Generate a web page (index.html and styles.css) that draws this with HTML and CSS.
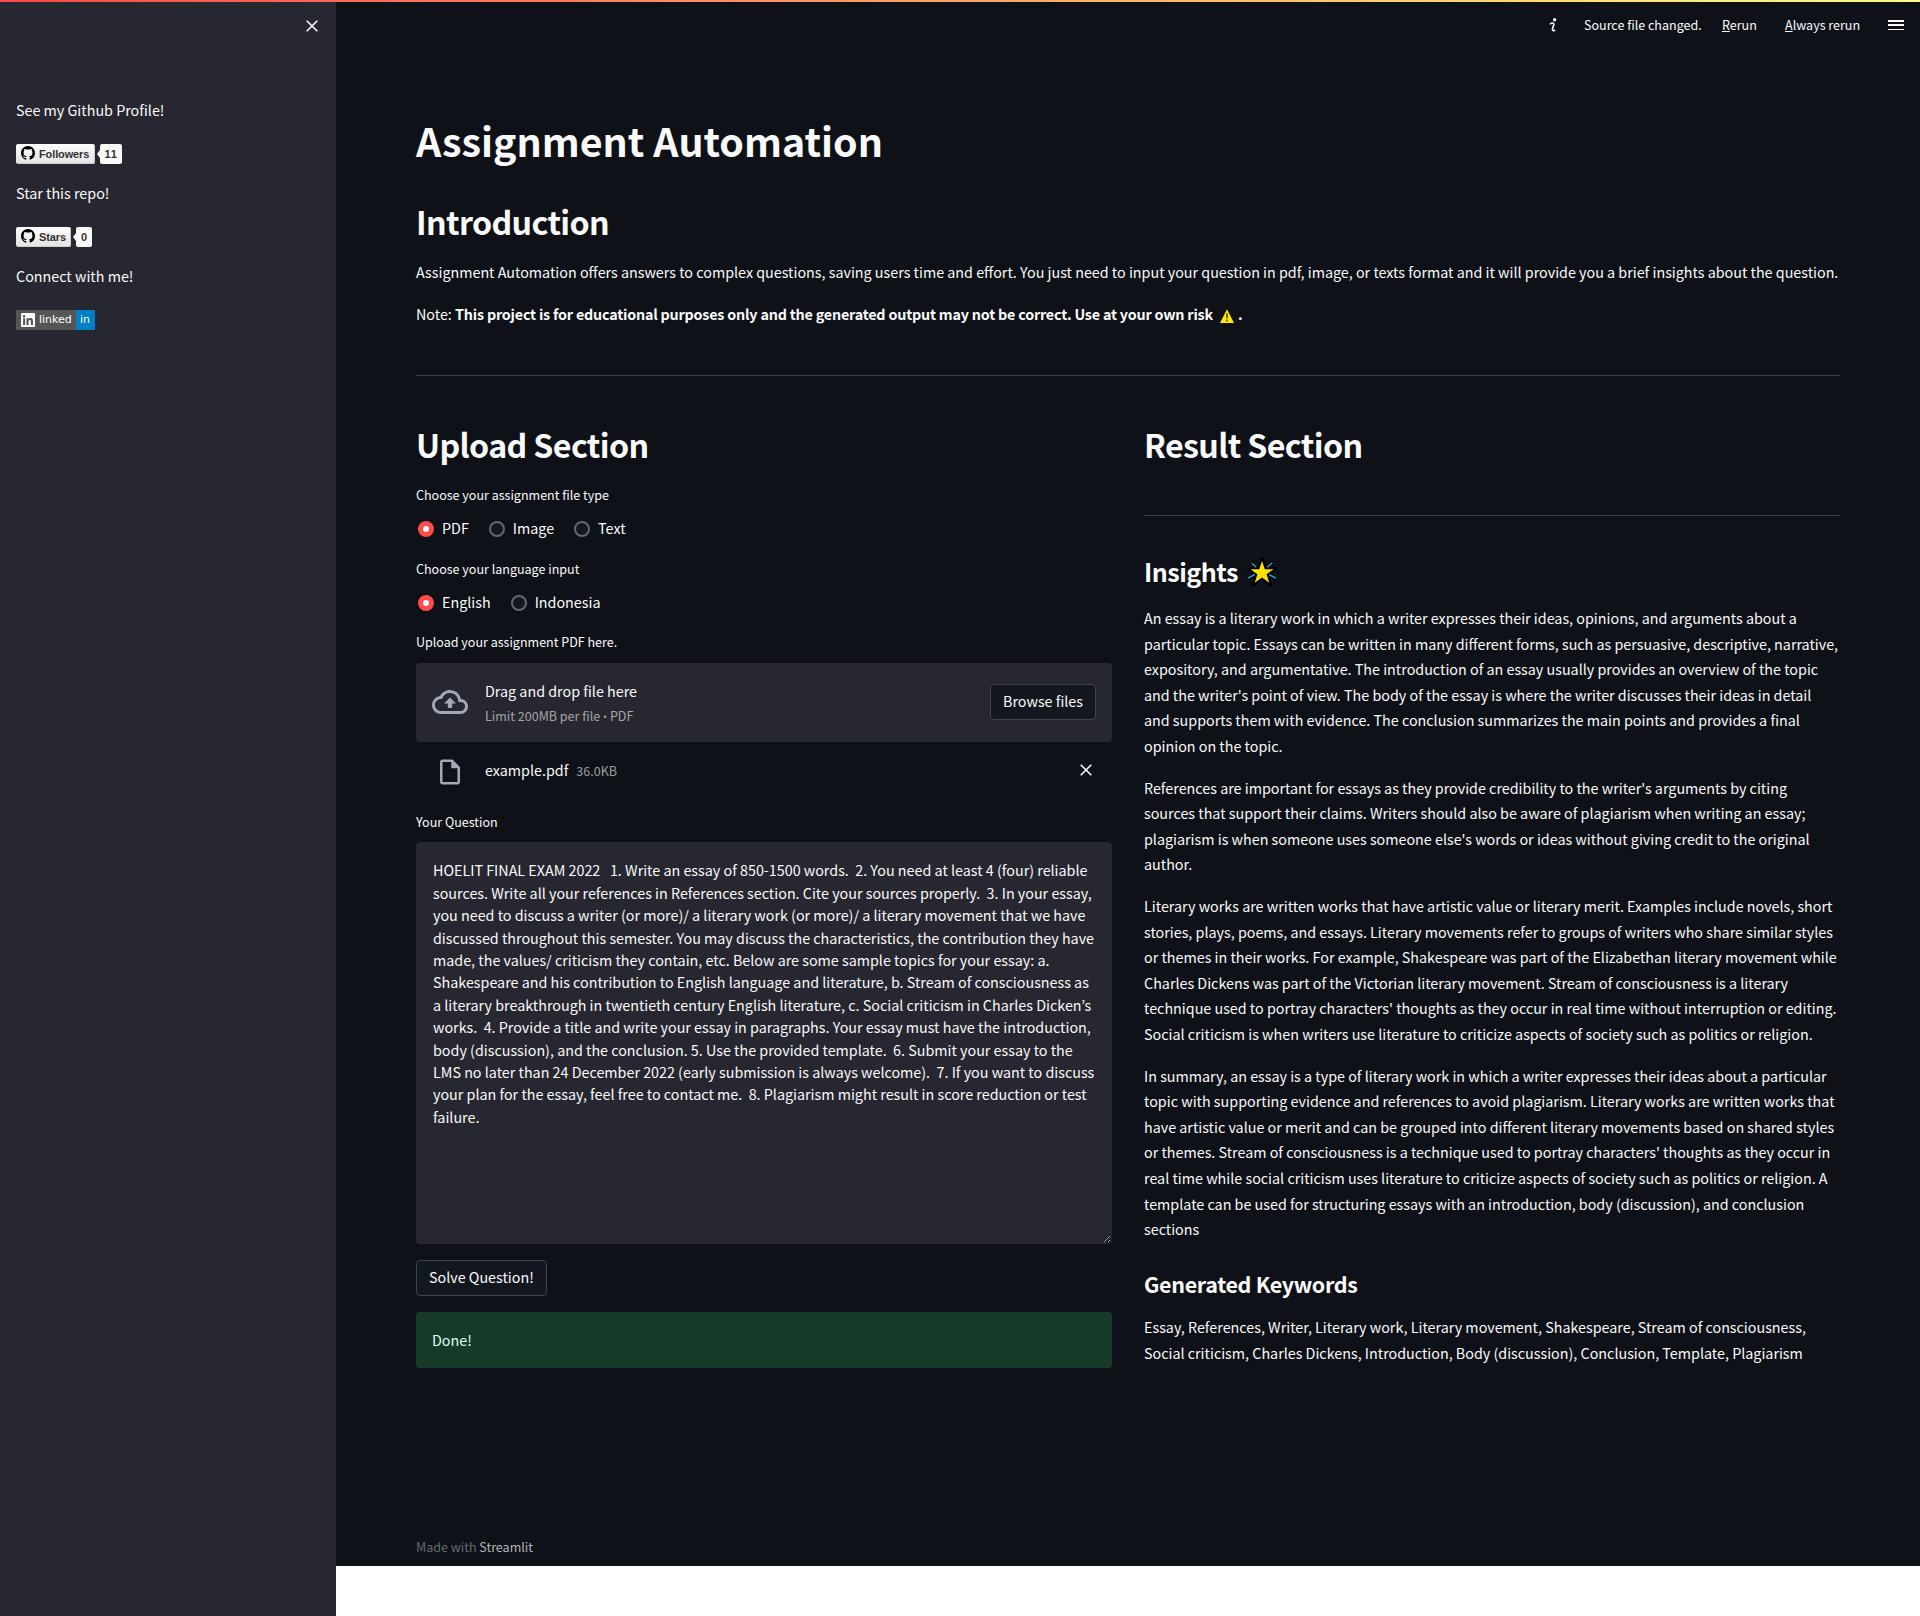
FILE: index.html
```html
<!DOCTYPE html>
<html lang="en">
<head>
<meta charset="utf-8">
<title>Assignment Automation</title>
<link rel="stylesheet" href="styles.css">
</head>
<body>
<div class="decoration"></div>
<div class="app">
  <aside class="sidebar">
    <div class="sidebar-head">
      <svg class="close" viewBox="0 0 12 12"><path d="M.7.7l10.6 10.6M11.3.7L.7 11.3"/></svg>
    </div>
    <p>See my Github Profile!</p>
    <div class="badge">
      <span class="badge-label followers"><svg viewBox="0 0 16 16"><path d="M8 0C3.58 0 0 3.58 0 8c0 3.54 2.29 6.53 5.47 7.59.4.07.55-.17.55-.38 0-.19-.01-.82-.01-1.49-2.01.37-2.53-.49-2.69-.94-.09-.23-.48-.94-.82-1.13-.28-.15-.68-.52-.01-.53.63-.01 1.08.58 1.23.82.72 1.21 1.87.87 2.33.66.07-.52.28-.87.51-1.07-1.78-.2-3.64-.89-3.64-3.95 0-.87.31-1.59.82-2.15-.08-.2-.36-1.02.08-2.12 0 0 .67-.21 2.2.82.64-.18 1.32-.27 2-.27s1.36.09 2 .27c1.53-1.04 2.2-.82 2.2-.82.44 1.1.16 1.92.08 2.12.51.56.82 1.27.82 2.15 0 3.07-1.87 3.75-3.65 3.95.29.25.54.73.54 1.48 0 1.07-.01 1.93-.01 2.2 0 .21.15.46.55.38A8.01 8.01 0 0016 8c0-4.42-3.58-8-8-8z"/></svg><span>Followers</span></span>
      <span class="badge-count wide">11</span>
    </div>
    <p>Star this repo!</p>
    <div class="badge">
      <span class="badge-label stars"><svg viewBox="0 0 16 16"><path d="M8 0C3.58 0 0 3.58 0 8c0 3.54 2.29 6.53 5.47 7.59.4.07.55-.17.55-.38 0-.19-.01-.82-.01-1.49-2.01.37-2.53-.49-2.69-.94-.09-.23-.48-.94-.82-1.13-.28-.15-.68-.52-.01-.53.63-.01 1.08.58 1.23.82.72 1.21 1.87.87 2.33.66.07-.52.28-.87.51-1.07-1.78-.2-3.64-.89-3.64-3.95 0-.87.31-1.59.82-2.15-.08-.2-.36-1.02.08-2.12 0 0 .67-.21 2.2.82.64-.18 1.32-.27 2-.27s1.36.09 2 .27c1.53-1.04 2.2-.82 2.2-.82.44 1.1.16 1.92.08 2.12.51.56.82 1.27.82 2.15 0 3.07-1.87 3.75-3.65 3.95.29.25.54.73.54 1.48 0 1.07-.01 1.93-.01 2.2 0 .21.15.46.55.38A8.01 8.01 0 0016 8c0-4.42-3.58-8-8-8z"/></svg><span>Stars</span></span>
      <span class="badge-count">0</span>
    </div>
    <p>Connect with me!</p>
    <div class="badge linkedin">
      <span class="linked"><svg viewBox="0 0 24 24"><path fill-rule="evenodd" d="M1.5 0h21A1.5 1.5 0 0124 1.500v21a1.500 1.500 0 01-1.500 1.500h-21A1.500 1.500 0 010 22.500v-21A1.500 1.500 0 011.500 0zM3.600 9v11.400h3.500V9zM5.300 3.400a2 2 0 100 4.100 2 2 0 000-4.100zM9.400 9v11.400h3.500v-5.600c0-1.500.3-3 2.200-3s1.900 1.700 1.900 3.100v5.500h3.500v-6.300c0-3.100-.7-5.400-4.300-5.400-1.700 0-2.900.9-3.400 1.800V9z"/></svg><span>linked</span></span><span class="in">in</span>
    </div>
  </aside>

  <main class="main">
    <header class="toolbar">
      <svg class="info" viewBox="0 0 8 14"><circle cx="5.600" cy="1.700" r="1.700"/><path d="M1 6.300C2 4.600 5.500 4.300 4.800 6.800L3.500 10.800C3 12.900 5 13.300 6 11.800"/></svg>
      <span class="t-source">Source file changed.</span>
      <span class="t-rerun"><u>R</u>erun</span>
      <span class="t-always"><u>A</u>lways rerun</span>
      <span class="menu"><i></i><i></i><i></i></span>
    </header>

    <div class="content">
      <h1>Assignment Automation</h1>
      <h2>Introduction</h2>
      <p class="intro">Assignment Automation offers answers to complex questions, saving users time and effort. You just need to input your question in pdf, image, or texts format and it will provide you a brief insights about the question.</p>
      <p>Note: <b>This project is for educational purposes only and the generated output may not be correct. Use at your own risk <svg class="warn" viewBox="0 0 16 16"><path d="M8 1.300L15 15H1z"/><path class="mark" d="M8 5.600v4.600M8 11.500v1.700"/></svg> .</b></p>
      <hr>

      <div class="columns">
        <section class="upload">
          <h2>Upload Section</h2>
          <label class="label">Choose your assignment file type</label>
          <div class="radios">
            <span class="radio"><i class="dot on"></i>PDF</span>
            <span class="radio"><i class="dot"></i>Image</span>
            <span class="radio"><i class="dot"></i>Text</span>
          </div>
          <label class="label">Choose your language input</label>
          <div class="radios">
            <span class="radio"><i class="dot on"></i>English</span>
            <span class="radio"><i class="dot"></i>Indonesia</span>
          </div>
          <label class="label upload-label">Upload your assignment PDF here.</label>
          <div class="dropzone">
            <svg class="cloud" viewBox="0 0 24 24"><path d="M19.350 10.040A7.490 7.490 0 0012 4C9.110 4 6.600 5.640 5.350 8.040A5.994 5.994 0 000 14c0 3.310 2.690 6 6 6h13c2.760 0 5-2.240 5-5 0-2.640-2.050-4.780-4.650-4.960zM19 18H6c-2.210 0-4-1.790-4-4 0-2.050 1.530-3.760 3.560-3.970l1.070-.11.500-.95A5.469 5.469 0 0112 6c2.620 0 4.880 1.860 5.390 4.430l.3 1.500 1.530.11A2.980 2.980 0 0122 15c0 1.650-1.350 3-3 3zM8 13h2.550v3h2.900v-3H16l-4-4z"/></svg>
            <div class="drop-text"><span>Drag and drop file here</span><small>Limit 200MB per file <span class="bullet">•</span> PDF</small></div>
            <button class="btn">Browse files</button>
          </div>
          <div class="file">
            <svg class="doc" viewBox="0 0 24 24"><path d="M14 2H6c-1.100 0-1.990.9-1.990 2L4 20c0 1.100.89 2 1.990 2H18c1.100 0 2-.9 2-2V8l-6-6zM6 20V4h7v5h5v11H6z"/></svg>
            <span>example.pdf</span><small>36.0KB</small>
            <svg class="close" viewBox="0 0 12 12"><path d="M.7.7l10.600 10.600M11.300.7L.7 11.300"/></svg>
          </div>
          <label class="label question-label">Your Question</label>
          <textarea class="question" spellcheck="false">HOELIT FINAL EXAM 2022   1. Write an essay of 850-1500 words.  2. You need at least 4 (four) reliable sources. Write all your references in References section. Cite your sources properly.  3. In your essay, you need to discuss a writer (or more)/ a literary work (or more)/ a literary movement that we have discussed throughout this semester. You may discuss the characteristics, the contribution they have made, the values/ criticism they contain, etc. Below are some sample topics for your essay: a. Shakespeare and his contribution to English language and literature, b. Stream of consciousness as a literary breakthrough in twentieth century English literature, c. Social criticism in Charles Dicken’s works.  4. Provide a title and write your essay in paragraphs. Your essay must have the introduction, body (discussion), and the conclusion. 5. Use the provided template.  6. Submit your essay to the LMS no later than 24 December 2022 (early submission is always welcome).  7. If you want to discuss your plan for the essay, feel free to contact me.  8. Plagiarism might result in score reduction or test failure.</textarea>
          <button class="btn solve">Solve Question!</button>
          <div class="done">Done!</div>
        </section>

        <section class="result">
          <h2>Result Section</h2>
          <hr>
          <h3>Insights <svg class="star" viewBox="0 0 30 30"><path class="halo" d="M4.800 6.300l4.500 4M25.300 5.700L20 10.300M1.800 21L8 17.300M22 17.700l6.200 3.300M15 4.300l2.600 8h8.700l-7 5 2.700 8.200-7-5-7 5 2.700-8.200-7-5h8.700z"/><path class="rays" d="M4.800 6.300l4.500 4M25.300 5.700L20 10.300M1.300 21L8 17.300M22 17.700l6.700 3.300"/><path class="body" d="M15 4l2.800 8.200h8.700l-6.900 5.100 2.700 8.400-7.300-5.100-7.300 5.100 2.700-8.400-6.900-5.100h8.700z"/></svg></h3>
          <p>An essay is a literary work in which a writer expresses their ideas, opinions, and arguments about a particular topic. Essays can be written in many different forms, such as persuasive, descriptive, narrative, expository, and argumentative. The introduction of an essay usually provides an overview of the topic and the writer's point of view. The body of the essay is where the writer discusses their ideas in detail and supports them with evidence. The conclusion summarizes the main points and provides a final opinion on the topic.</p>
          <p>References are important for essays as they provide credibility to the writer's arguments by citing sources that support their claims. Writers should also be aware of plagiarism when writing an essay; plagiarism is when someone uses someone else's words or ideas without giving credit to the original author.</p>
          <p>Literary works are written works that have artistic value or literary merit. Examples include novels, short stories, plays, poems, and essays. Literary movements refer to groups of writers who share similar styles or themes in their works. For example, Shakespeare was part of the Elizabethan literary movement while Charles Dickens was part of the Victorian literary movement. Stream of consciousness is a literary technique used to portray characters' thoughts as they occur in real time without interruption or editing. Social criticism is when writers use literature to criticize aspects of society such as politics or religion.</p>
          <p>In summary, an essay is a type of literary work in which a writer expresses their ideas about a particular topic with supporting evidence and references to avoid plagiarism. Literary works are written works that have artistic value or merit and can be grouped into different literary movements based on shared styles or themes. Stream of consciousness is a technique used to portray characters' thoughts as they occur in real time while social criticism uses literature to criticize aspects of society such as politics or religion. A template can be used for structuring essays with an introduction, body (discussion), and conclusion sections</p>
          <h4>Generated Keywords</h4>
          <p>Essay, References, Writer, Literary work, Literary movement, Shakespeare, Stream of consciousness, Social criticism, Charles Dickens, Introduction, Body (discussion), Conclusion, Template, Plagiarism</p>
        </section>
      </div>
    </div>
    <footer>Made with <span>Streamlit</span></footer>
  </main>
</div>
</body>
</html>
```

FILE: styles.css
```css
* { box-sizing: border-box; }

body {
  margin: 0;
  background: #fff;
  color: #fafafa;
  font-family: "Noto Sans CJK KR", "Noto Sans", sans-serif;
  font-size: 14.325px;
  line-height: 25.6px;
}

p, h1, h2, h3, h4 { margin: 0; }
small { font-size: 12.53px; color: rgba(250, 250, 250, .6); }
svg { display: block; flex: none; }

.decoration {
  position: absolute;
  z-index: 2;
  top: 0;
  left: 0;
  right: 0;
  height: 2px;
  background: linear-gradient(90deg, #ff4b4b, #fffd80);
}

.app { display: flex; height: 1616px; overflow: hidden; }

/* Sidebar */
.sidebar {
  width: 336px;
  flex: none;
  padding: 0 16px;
  background: #262730;
}
.sidebar-head {
  display: flex;
  justify-content: flex-end;
  height: 97px;
  padding: 20px 2px 0 0;
}
.close {
  width: 12px;
  height: 12px;
  fill: none;
  stroke: #fafafa;
  stroke-width: 1.6;
}
.badge {
  display: flex;
  height: 20px;
  margin: 21.400px 0 16px;
  font: bold 11px/20px "Liberation Sans", Arial, sans-serif;
  color: #333;
}
.badge svg { width: 14px; height: 14px; }
.badge-label {
  display: flex;
  align-items: center;
  gap: 4px;
  height: 20px;
  padding-left: 5px;
  border: 1px solid #ccc;
  border-width: 0 1px 1px 0;
  border-radius: 2px;
  background: linear-gradient(#fcfcfc, #e4e4e4);
}
.badge-label span { padding-top: 1px; }
.followers { width: 79px; letter-spacing: -.12px; }
.stars { width: 55px; letter-spacing: -.1px; }
.badge-count {
  position: relative;
  width: 16px;
  margin-left: 5px;
  border-radius: 2px;
  background: #fafafa;
  text-align: center;
}
.badge-count.wide { width: 22px; letter-spacing: .6px; }
.badge-count::before {
  content: "";
  position: absolute;
  left: -3px;
  top: 6px;
  border: 4px solid transparent;
  border-left: 0;
  border-right: 3px solid #fafafa;
}
.linkedin { color: #fff; font: 11px/20px "DejaVu Sans", Verdana, sans-serif; }
.linked { display: flex; align-items: center; gap: 4px; width: 60px; padding-left: 5px; background: #555; }
.linked svg { fill: #fff; }
.in { width: 19px; padding-left: 4px; background: #007ec6; }

/* Main area */
.main {
  display: flex;
  flex-direction: column;
  flex: 1;
  height: 1566px;
  background: #0e1117;
}
.toolbar {
  display: flex;
  height: 96px;
  padding: 12px 16px 0 0;
  justify-content: flex-end;
  font-size: 12.53px;
}
.toolbar span { line-height: 25.600px; white-space: nowrap; }
.info { width: 8px; height: 14px; margin: 6px 27px 0 0; fill: #fafafa; }
.info path { fill: none; stroke: #fafafa; stroke-width: 1.600; }
.t-source { width: 138px; }
.t-rerun { width: 63px; }
.t-always { width: 103px; }
.menu { display: flex; flex-direction: column; gap: 2.500px; padding-top: 8px; }
.menu i { width: 16px; height: 1.800px; background: #fafafa; }

.content { flex: 1; padding: 0 80px; }
.content p { margin-bottom: 16px; }
h1 { padding: 18px 0; font-size: 39.380px; line-height: 52.800px; font-weight: 700; }
h2 { padding: 15px 0 16px; font-size: 32.220px; line-height: 43.200px; font-weight: 600; letter-spacing: -.64px; }
.intro { white-space: nowrap; }
.content b { letter-spacing: -.19px; }
hr { height: 1px; margin: 49px 0 0; border: 0; background: #3e4046; }
.warn { display: inline-block; width: 16px; height: 16px; margin-left: 3px; vertical-align: -4px; fill: #ffe500; }
.warn .mark { stroke: #4a4300; stroke-width: 1.600; }

.columns { display: grid; grid-template-columns: 696px 696px; gap: 32px; padding-top: 32px; }
.upload { display: flex; flex-direction: column; align-items: stretch; }
.label { height: 26px; font-size: 12.530px; }
.radios { display: flex; gap: 20px; height: 48px; padding: 7px 0 0 2px; }
.radio { display: flex; gap: 8px; height: 25px; }
.dot {
  width: 16px;
  height: 16px;
  margin-top: 6px;
  border: 2px solid #65676b;
  border-radius: 50%;
  background: #131720;
}
.dot.on { border: 5px solid #ff4b4b; background: #fafafa; }
.upload-label { margin-top: -1px; }
.dropzone {
  display: flex;
  align-items: center;
  height: 79px;
  margin-top: 8px;
  padding: 0 16px 2px;
  border-radius: 4px;
  background: #262730;
}
.cloud { width: 36px; height: 36px; margin-right: 17px; fill: #a3a8b8; }
.drop-text { display: flex; flex-direction: column; flex: 1; padding-top: 2px; }
.drop-text small { line-height: 23px; }
.bullet { font-family: "Open Sans", sans-serif; font-size: 11px; }
.btn {
  height: 36px;
  padding: 0 12px 2px;
  border: 1px solid #41434a;
  border-radius: 4px;
  background: #131720;
  color: inherit;
  font: inherit;
}
.file { display: flex; align-items: center; height: 59px; padding: 0 20px 3px 19px; }
.doc { width: 30px; height: 30px; margin: 3px 20px 0 0; fill: #a3a8b8; }
.file span { margin-bottom: 1.500px; }
.file small { margin-left: 8px; }
.file .close { margin-left: auto; }
.question-label { margin-top: 8px; height: 33px; }
.question {
  display: block;
  width: 696px;
  height: 402px;
  margin: 0;
  padding: 16px 12px 16px 16px;
  border: 1px solid #262730;
  border-radius: 4px;
  outline: 0;
  background: #262730;
  color: #fafafa;
  font-family: inherit;
  font-size: 14.325px;
  line-height: 22.400px;
  resize: vertical;
  overflow: hidden;
}
.solve { align-self: flex-start; margin: 16px 0; padding-bottom: 4px; }
.done {
  height: 56px;
  padding: 15px 16px;
  border-radius: 4px;
  background: #173928;
  color: #dffde9;
}

.result hr { margin: 33px 0 0; }
h3 { padding: 38px 0 16.700px; font-size: 25.060px; line-height: 34px; font-weight: 600; letter-spacing: -.5px; }
h4 { padding: 11.500px 0 15.700px; font-size: 21.480px; line-height: 29px; font-weight: 600; letter-spacing: -.32px; }
.star { display: inline-block; width: 30px; height: 30px; margin-left: 4px; vertical-align: -5px; }
.star .halo { fill: #000; stroke: #000; stroke-width: 4.500; }
.star .rays { stroke: #1ba4d8; stroke-width: 1.500; }
.star .body { fill: #ffe000; }

footer {
  height: 34px;
  padding-left: 80px;
  font-size: 12.530px;
  line-height: 30px;
  color: #696b6f;
}
footer span { color: #b4b5b8; }
```
